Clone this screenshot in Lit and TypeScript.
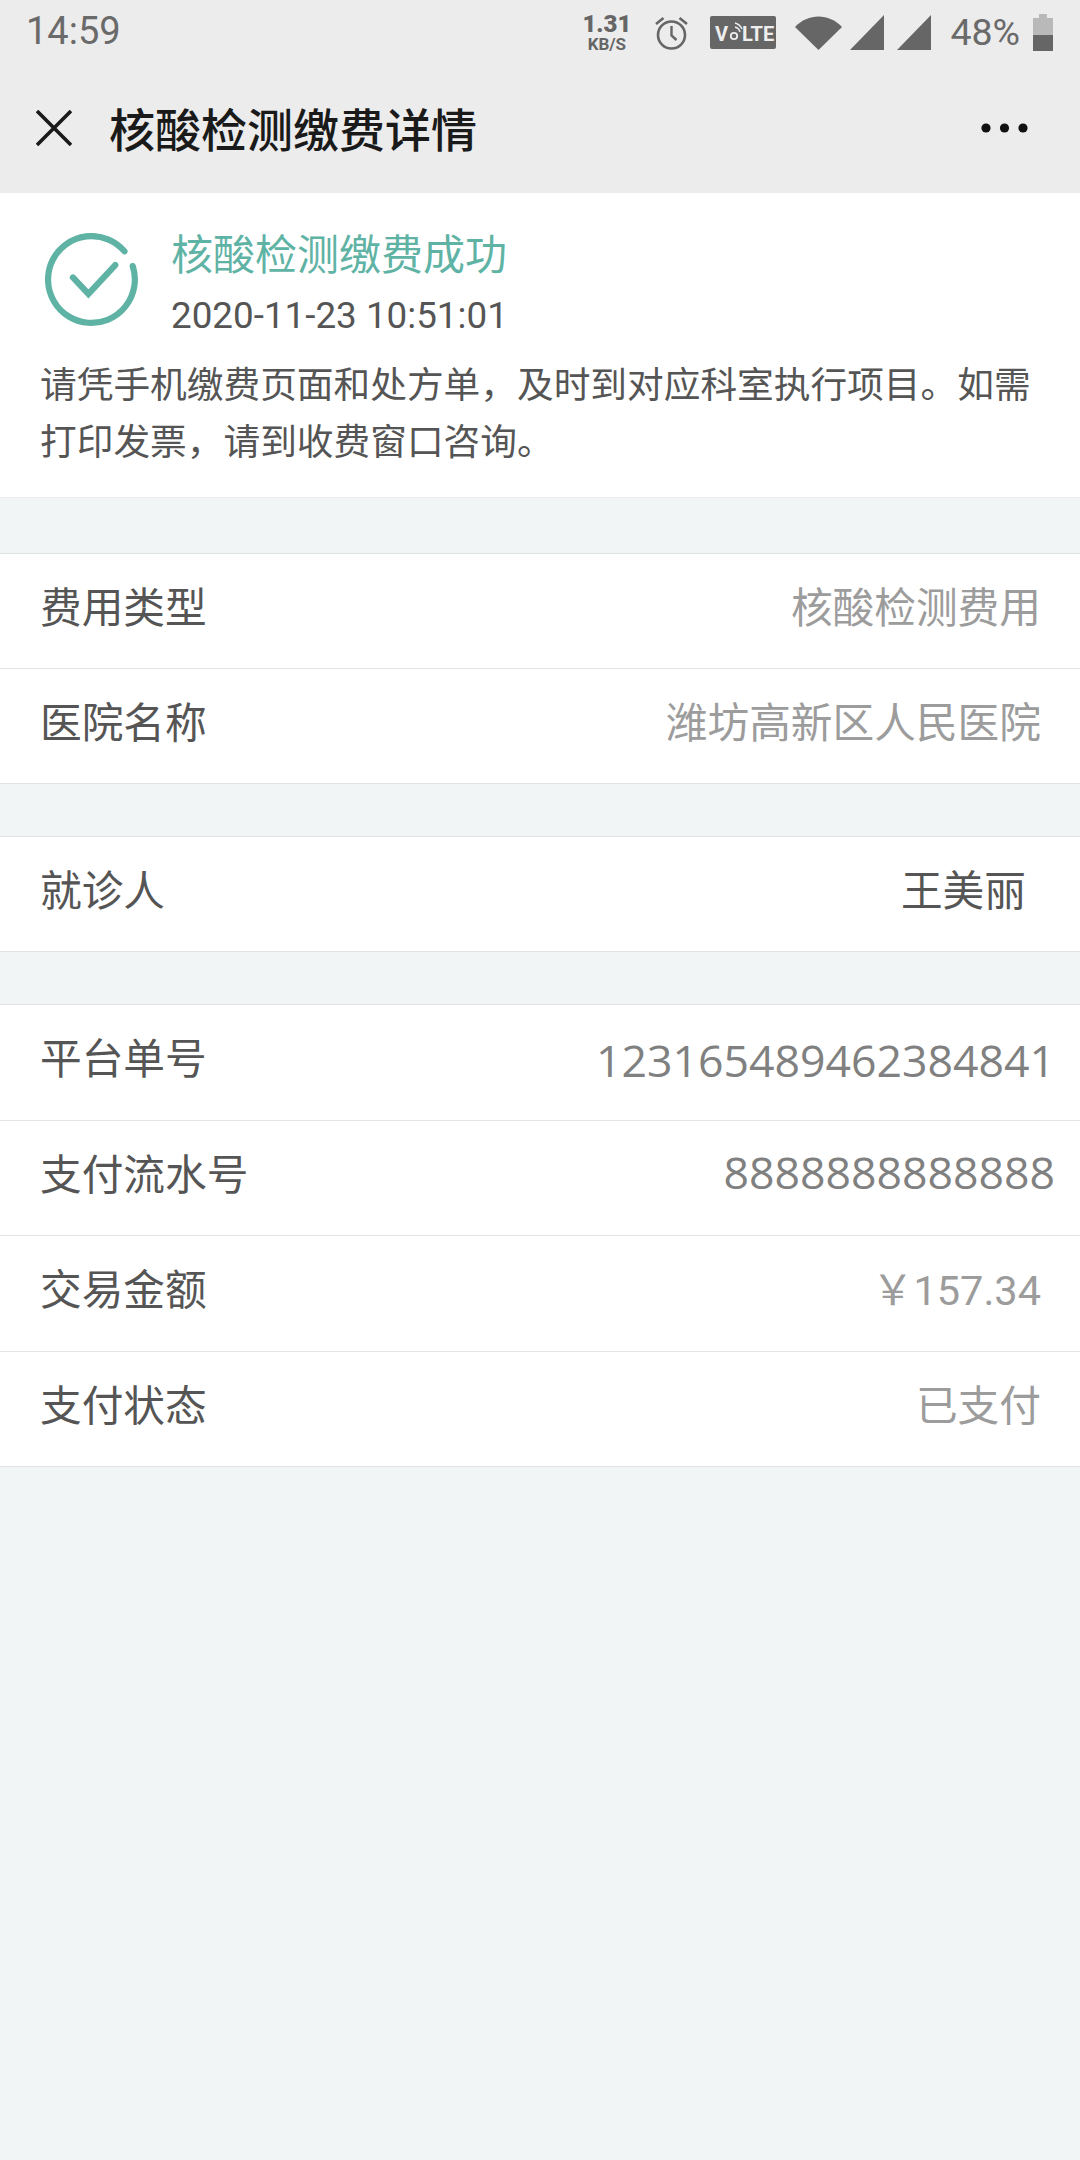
import { LitElement, css, html } from "lit";
import { customElement } from "lit/decorators.js";

interface Row {
  label: string;
  value: string;
  kind: string;
}

const groups: { cls: string; rows: Row[] }[] = [
  {
    cls: "g1",
    rows: [
      { label: "费用类型", value: "核酸检测费用", kind: "muted" },
      { label: "医院名称", value: "潍坊高新区人民医院", kind: "muted" },
    ],
  },
  { cls: "g2", rows: [{ label: "就诊人", value: "王美丽", kind: "name" }] },
  {
    cls: "g3",
    rows: [
      { label: "平台单号", value: "123165489462384841", kind: "num low" },
      { label: "支付流水号", value: "8888888888888", kind: "num" },
      { label: "交易金额", value: "￥157.34", kind: "money" },
      { label: "支付状态", value: "已支付", kind: "muted" },
    ],
  },
];

@customElement("app-root")
export class AppRoot extends LitElement {
  static styles = css`
    :host {
      display: block;
      width: 1080px;
      height: 2160px;
      background: #f2f5f5;
      font-family: "Noto Sans CJK SC", "Noto Sans", sans-serif;
      overflow: hidden;
    }

    .top {
      background: #ececec;
      height: 193px;
    }

    .status {
      height: 62px;
      box-sizing: border-box;
      padding: 3px 27px 0 26px;
      display: flex;
      align-items: center;
      color: #666;
    }

    .time {
      font: 38px/1 Roboto, sans-serif;
      color: #6a6a6a;
      flex: 1;
      margin-top: -4px;
    }

    .speed {
      width: 47px;
      display: flex;
      flex-direction: column;
      align-items: center;
      font-family: Roboto, sans-serif;
      font-weight: 700;
      color: #666;
    }

    .speed b {
      font-size: 24px;
      line-height: 23px;
    }

    .speed i {
      font-style: normal;
      font-size: 17px;
      line-height: 16px;
    }

    .status svg {
      display: block;
      flex: none;
    }

    .alarm {
      margin-left: 25px;
    }

    .volte {
      margin-left: 22px;
    }

    .wifi {
      margin-left: 19px;
    }

    .sig1 {
      margin-left: 8px;
    }

    .sig2 {
      margin-left: 13px;
    }

    .pct {
      font: 37.5px/1 Roboto, sans-serif;
      color: #6a6a6a;
      margin-left: 19px;
    }

    .batt {
      margin-left: 13px;
    }

    .nav {
      height: 131px;
      display: flex;
      align-items: center;
      padding: 0 52px 0 36px;
    }

    .nav h1 {
      flex: 1;
      margin: -2px 0 0 37px;
      font-size: 46px;
      line-height: 1;
      font-weight: 500;
      color: #1a1a1a;
    }

    .card {
      background: #fff;
      height: 305px;
      box-sizing: border-box;
      padding: 40px 30px 0 40px;
      border-bottom: 1px solid #eceeee;
    }

    .head {
      display: flex;
      align-items: flex-start;
    }

    .check {
      display: block;
      flex: none;
      margin-left: 5px;
    }

    .head-text {
      margin-left: 33px;
      margin-top: -5px;
    }

    .ok {
      font-size: 42px;
      line-height: 48px;
      color: #5fb3a5;
    }

    .date {
      font: 36.8px/44px Roboto, sans-serif;
      color: #555;
      margin-top: 18px;
    }

    .desc {
      margin: 16px 0 0;
      font-size: 36.7px;
      line-height: 57px;
      color: #555;
    }

    .group {
      background: #fff;
      border-top: 1px solid #dfe3e3;
      border-bottom: 1px solid #dfe3e3;
    }

    .g1 {
      margin-top: 55px;
    }

    .g2,
    .g3 {
      margin-top: 52px;
    }

    .row {
      display: flex;
      align-items: center;
      justify-content: space-between;
      box-sizing: border-box;
      height: 115px;
      padding: 0 0 10px 40px;
      font-size: 41.7px;
      line-height: 1;
      border-top: 1px solid #e2e5e5;
      color: #555;
    }

    .row:first-child {
      height: 114px;
      border-top: none;
    }

    .g3 .row {
      height: 115.5px;
    }

    .g3 .row:first-child {
      height: 114.5px;
    }

    .value {
      white-space: nowrap;
      padding-right: 39px;
    }

    .muted {
      color: #9c9c9c;
    }

    .name {
      color: #555;
      padding-right: 54px;
    }

    .num {
      font: 44.6px/1 "Open Sans", sans-serif;
      color: #808080;
      padding-right: 25px;
    }

    .low {
      padding-top: 6px;
    }

    .money {
      font: 41.5px/1 Roboto, "Noto Sans CJK SC", sans-serif;
      color: #9c9c9c;
      padding-top: 4px;
      padding-right: 39px;
    }
  `;

  render() {
    return html`
      <div class="top">
        <div class="status">
          <span class="time">14:59</span>
          <span class="speed"><b>1.31</b><i>KB/S</i></span>
          <svg class="alarm" width="33" height="35" viewBox="0 0 33 35" fill="none" stroke="#666">
            <circle cx="16.5" cy="20" r="13.5" stroke-width="2.6" />
            <path d="M16.5 11v9.5l5 4.5" stroke-width="2.4" />
            <path d="M1 9 8.5 3M32 9 24.5 3" stroke-width="2.6" />
          </svg>
          <svg class="volte" width="66" height="33" viewBox="0 0 66 33">
            <rect width="66" height="33" rx="2" fill="#666" />
            <text x="5" y="24.5" font-family="Roboto, sans-serif" font-weight="700" font-size="20" fill="#eee">V</text>
            <circle cx="24" cy="20" r="3.2" fill="none" stroke="#eee" stroke-width="1.8" />
            <path d="M25 11a7 7 0 0 1 5 5M25 7a11 11 0 0 1 7 6" fill="none" stroke="#eee" stroke-width="1.4" />
            <text x="32" y="24.5" font-family="Roboto, sans-serif" font-weight="700" font-size="20" fill="#eee">LTE</text>
          </svg>
          <svg class="wifi" width="47" height="34" viewBox="0 0 47 34">
            <path d="M0 11C13 -3 34 -3 47 11L23.5 34Z" fill="#666" />
          </svg>
          <svg class="sig1" width="34" height="35" viewBox="0 0 34 35">
            <path d="M34 0V35H0Z" fill="#666" />
          </svg>
          <svg class="sig2" width="34" height="35" viewBox="0 0 34 35">
            <path d="M34 0V35H0Z" fill="#666" />
          </svg>
          <span class="pct">48%</span>
          <svg class="batt" width="20" height="37" viewBox="0 0 20 37">
            <path d="M0 4H6V0H14V4H20V21H0Z" fill="#b9b9b9" />
            <rect y="21" width="20" height="16" fill="#666" />
          </svg>
        </div>
        <div class="nav">
          <svg width="36" height="36" viewBox="0 0 36 36" fill="none" stroke="#1a1a1a" stroke-width="3.6">
            <path d="M1 1 35 35M35 1 1 35" />
          </svg>
          <h1>核酸检测缴费详情</h1>
          <svg width="47" height="10" viewBox="0 0 47 10" fill="#111">
            <circle cx="5" cy="5" r="4.6" />
            <circle cx="23.5" cy="5" r="4.6" />
            <circle cx="42" cy="5" r="4.6" />
          </svg>
        </div>
      </div>

      <div class="card">
        <div class="head">
          <svg class="check" width="93" height="93" viewBox="0 0 90 90" fill="none" stroke="#5fb3a5" stroke-width="6" stroke-linecap="round">
            <path d="M84.9 32A42 42 0 1 1 76.9 17.7" />
            <path d="M27 43 42 59 68 31" />
          </svg>
          <div class="head-text">
            <div class="ok">核酸检测缴费成功</div>
            <div class="date">2020-11-23 10:51:01</div>
          </div>
        </div>
        <p class="desc">请凭手机缴费页面和处方单，及时到对应科室执行项目。如需打印发票，请到收费窗口咨询。</p>
      </div>

      ${groups.map(
        (g) => html`
          <div class="group ${g.cls}">
            ${g.rows.map(
              (r) => html`
                <div class="row">
                  <span>${r.label}</span>
                  <span class="value ${r.kind}">${r.value}</span>
                </div>
              `
            )}
          </div>
        `
      )}
    `;
  }
}
